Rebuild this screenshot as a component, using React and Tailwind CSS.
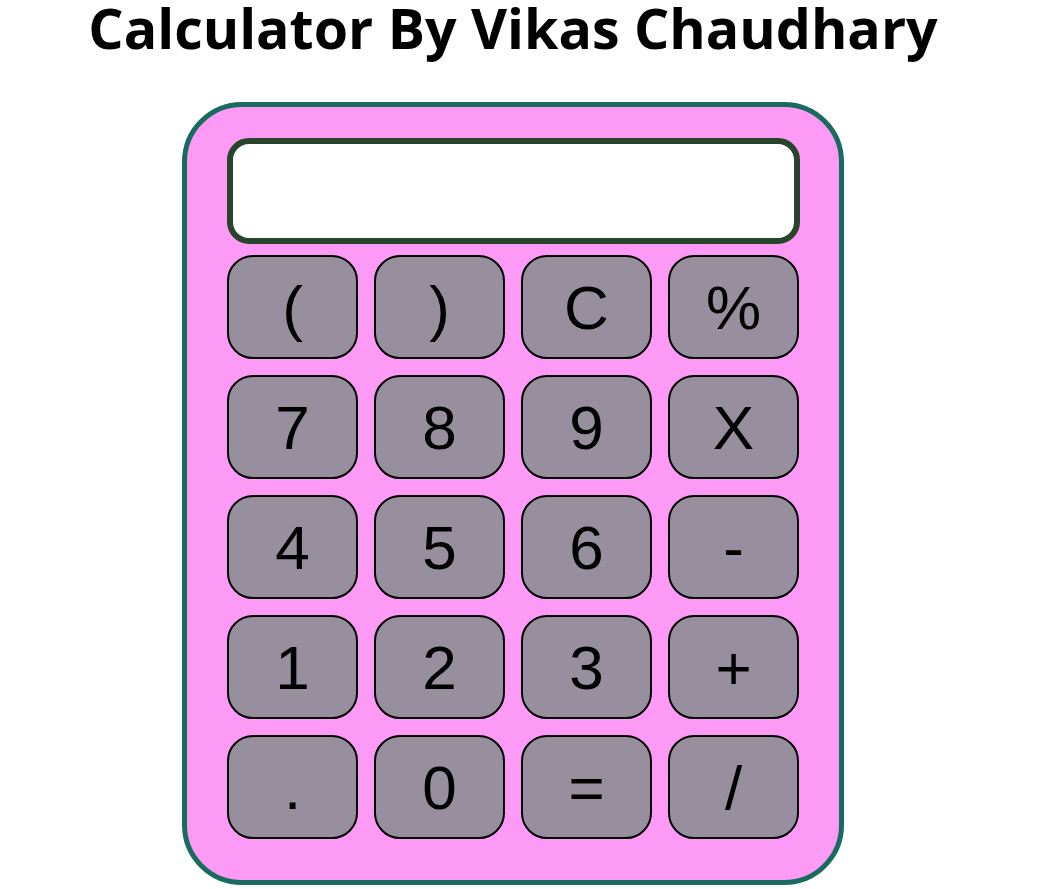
const keys = ['(', ')', 'C', '%', '7', '8', '9', 'X', '4', '5', '6', '-', '1', '2', '3', '+', '.', '0', '=', '/'];

export default function App() {
  return (
    <div className="w-[1026px] bg-white">
      <h1 className="text-center text-[55.5px] leading-[56px] font-bold text-black font-['Open_Sans',sans-serif]">
        Calculator By Vikas Chaudhary
      </h1>
      <div className="mx-auto mt-[46px] w-[662px] rounded-[60px] border-[5px] border-[#176b5f] bg-[#fd9af6] px-[40px] pt-[31px] pb-[41px]">
        <div className="h-[106px] w-[573px] rounded-[22px] border-[6px] border-[#27452a] bg-white" />
        <div className="mt-[11px] grid grid-cols-[repeat(4,131px)] gap-x-[16px] gap-y-[16px]">
          {keys.map((k) => (
            <button
              key={k}
              className="flex h-[104px] items-center justify-center rounded-[26px] border-2 border-black bg-[#978e9e] text-[62px] text-black font-['Liberation_Sans',sans-serif]"
            >
              {k}
            </button>
          ))}
        </div>
      </div>
    </div>
  );
}
